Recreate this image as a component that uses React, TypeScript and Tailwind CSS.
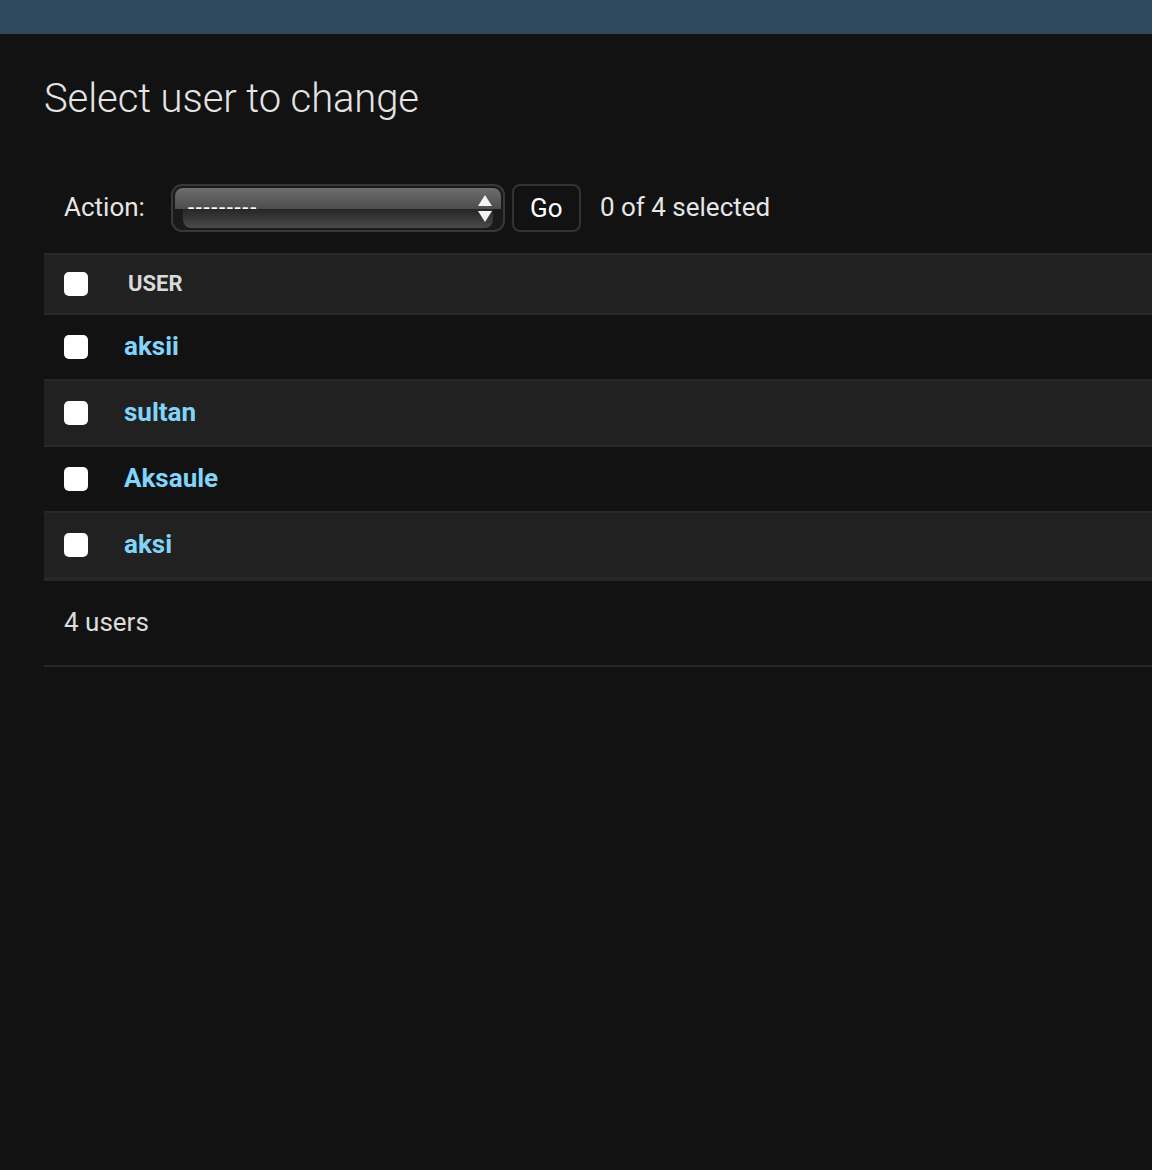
const USERS = ["aksii", "sultan", "Aksaule", "aksi"];

function Checkbox() {
	return <div className="w-[24px] h-[24px] rounded-[5px] bg-white shrink-0" />;
}

function ActionSelect() {
	return (
		<div className="relative w-[334px] h-[48px] rounded-[11px] border-2 border-[#383838] bg-[#1a1a1a] p-[2px] flex flex-col">
			<div className="h-[21px] rounded-t-[8px] bg-gradient-to-b from-[#6e6e6e] to-[#4c4c4c]" />
			<div className="flex-1 ml-[8px] mr-[8px] rounded-b-[8px] bg-gradient-to-b from-[#262626] to-[#4a4a4a]" />
			<span className="absolute left-[15px] top-[7px] text-[22px] leading-[30px] tracking-[1.7px] text-white">
				---------
			</span>
			<svg className="absolute right-[10px] top-[8px]" width="16" height="30" viewBox="0 0 16 30">
				<polygon points="8,1 15,12 1,12" fill="#f2f2f2" />
				<polygon points="1,17 15,17 8,28" fill="#f2f2f2" />
			</svg>
		</div>
	);
}

export default function App() {
	return (
		<div className="min-h-[1170px] bg-[#121212] font-['Roboto',sans-serif] overflow-hidden">
			{/* Header */}
			<div className="h-[34px] bg-[#2f4a5d]" />

			<div className="pl-[44px]">
				<h1 className="mt-[40px] text-[40px] leading-[50px] font-light tracking-[-0.1px] text-[#e4e4e4]">
					Select user to change
				</h1>

				{/* Actions */}
				<div className="mt-[60px] flex items-center pl-[20px] h-[48px] text-[26px] text-[#e6e6e6]">
					<span className="mr-[26px] -mt-px">Action:</span>
					<ActionSelect />
					<button
						type="button"
						className="ml-[7px] w-[69px] h-[48px] rounded-[8px] border-2 border-[#333] bg-[#121212] text-[26px] text-white"
					>
						Go
					</button>
					<span className="ml-[19px] -mt-px">0 of 4 selected</span>
				</div>

				{/* Table */}
				<div className="mt-[21px] w-[1200px]">
					<div className="h-[62px] flex items-center bg-[#212121] border-t-2 border-b-2 border-[#282828] pl-[20px]">
						<Checkbox />
						<span className="ml-[40px] -mt-px text-[22px] font-bold text-[#dadada]">USER</span>
					</div>
					{USERS.map((u, i) => (
						<div
							key={u}
							className={`h-[66px] flex items-center pl-[20px] border-b-2 border-[#282828] ${i % 2 === 1 ? "bg-[#212121]" : "bg-[#121212]"}`}
						>
							<Checkbox />
							<a href="#" className="ml-[36px] -mt-px text-[26px] font-bold text-[#81d4fa]">
								{u}
							</a>
						</div>
					))}
					<div className="h-[88px] flex items-center pl-[20px] pb-[2px] border-t-2 border-b-2 border-[#282828] text-[26px] text-[#dcdcdc]">
						4 users
					</div>
				</div>
			</div>
		</div>
	);
}
